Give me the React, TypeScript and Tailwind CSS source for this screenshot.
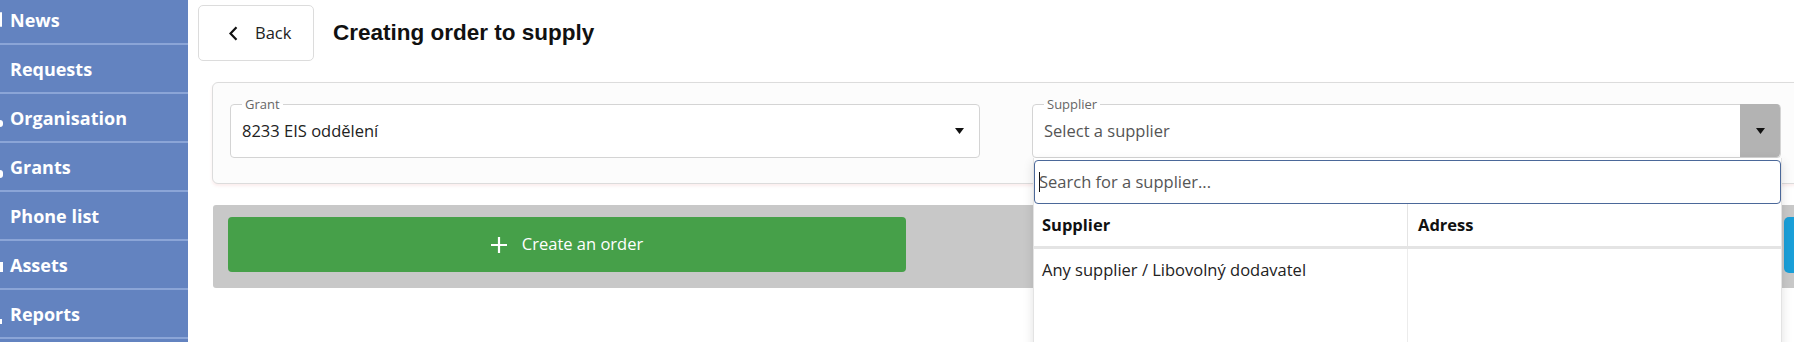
import React from "react";

const menu = [
  { label: "News", mark: "h-[15px] w-[2px] rounded-[1px]" },
  { label: "Requests", mark: "" },
  { label: "Organisation", mark: "h-[7px] w-[3px] rounded-r-full translate-y-[6px]" },
  { label: "Grants", mark: "h-[8px] w-[4px] rounded-r-full translate-y-[7px]" },
  { label: "Phone list", mark: "" },
  { label: "Assets", mark: "h-[10px] w-[3px] translate-y-[2px]" },
  { label: "Reports", mark: "h-[5px] w-[2px] translate-y-[8px]" },
];

function Sidebar() {
  return (
    <aside className="w-[188px] shrink-0 bg-[#6383c0] -mt-[4px]">
      {menu.map((m) => (
        <div
          key={m.label}
          className="flex h-[49px] items-center border-b-2 border-[#8ba5d7] text-[18px] font-bold text-white"
        >
          <span className="flex w-[3px] justify-start">
            {m.mark && <span className={"block bg-white " + m.mark} />}
          </span>
          <span className="ml-[7px] pt-[2px]">{m.label}</span>
        </div>
      ))}
    </aside>
  );
}

function Caret() {
  return (
    <svg width="9" height="6" viewBox="0 0 9 6">
      <path d="M0 0h9L4.5 6z" fill="#111" />
    </svg>
  );
}

function Field({ label, children }: { label: string; children: React.ReactNode }) {
  return (
    <fieldset className="relative h-[62px] rounded-[4px] border border-[#d4d4d4] bg-white px-[11px]">
      <legend className="px-[3px] text-[13px] leading-[16px] text-[#666]">{label}</legend>
      {children}
    </fieldset>
  );
}

export default function App() {
  return (
    <div className="flex h-[342px] w-[1794px] overflow-hidden bg-white font-['Open_Sans',sans-serif] text-[#222]">
      <Sidebar />
      <main className="min-w-0 flex-1">
        {/* Header */}
        <div className="flex items-center pl-[10px] pt-[5px]">
          <button className="flex h-[56px] w-[116px] items-center rounded-[5px] border border-[#dcdcdc] bg-white pl-[29px] text-[16.5px] text-[#222]">
            <svg width="11" height="15" viewBox="0 0 11 15" className="mr-[16px]">
              <path d="M8.5 1.2L2.5 7.5l6 6.3" fill="none" stroke="#111" strokeWidth="2.2" />
            </svg>
            Back
          </button>
          <h1 className="ml-[19px] -mt-[1px] font-['Liberation_Sans',Arial,sans-serif] text-[22.5px] font-bold text-[#111]">
            Creating order to supply
          </h1>
        </div>

        {/* Form panel */}
        <div className="ml-[24px] mt-[21px] w-[1588px] rounded-[6px] border border-[#dcdcdc] bg-[#fcfcfc] px-[17px] pb-[25px] pt-[13px] shadow-[0_2px_3px_rgba(225,110,110,0.12)]">
          <div className="grid grid-cols-[750px_749px] gap-x-[52px]">
            <Field label="Grant">
              <div className="flex h-[38px] items-center justify-between pr-[4px] text-[16.5px]">
                <span>8233 EIS oddělení</span>
                <Caret />
              </div>
            </Field>

            <div className="relative">
              <Field label="Supplier">
                <div className="flex h-[38px] items-center text-[16.5px] text-[#555]">Select a supplier</div>
                <div className="absolute bottom-0 right-0 top-[-8px] flex w-[40px] items-center justify-center rounded-r-[4px] bg-[#b3b3b3]">
                  <Caret />
                </div>
              </Field>

              {/* Open supplier dropdown */}
              <div className="absolute left-[1px] top-[62px] z-10 h-[200px] w-[749px] border-x border-[#e3e3e3] bg-white pt-[2px] shadow-[0_4px_10px_rgba(0,0,0,0.12)]">
                <div className="flex h-[44px] items-center rounded-[4px] border border-[#4b6899] px-[4px] text-[16.5px] text-[#555]">
                  <span className="h-[20px] w-px bg-[#111]" />
                  <span className="-ml-px">Search for a supplier...</span>
                </div>
                <div className="grid grid-cols-[374px_1fr] text-[16.5px]">
                  <div className="flex h-[45px] items-center border-b-[3px] border-r border-[#e4e4e4] px-[8px] font-bold text-[#111]">
                    Supplier
                  </div>
                  <div className="flex h-[45px] items-center border-b-[3px] border-[#e4e4e4] px-[10px] font-bold text-[#111]">
                    Adress
                  </div>
                  <div className="h-[120px] border-r border-[#ececec] px-[8px] pt-[9px]">
                    Any supplier / Libovolný dodavatel
                  </div>
                  <div className="h-[120px]" />
                </div>
              </div>
            </div>
          </div>
        </div>

        {/* Action bar */}
        <div className="ml-[25px] mt-[21px] flex h-[83px] w-[1800px] items-start rounded-[3px] bg-[#c8c8c8] pl-[15px] pt-[12px]">
          <button className="flex h-[55px] w-[678px] shrink-0 items-center justify-center rounded-[4px] bg-[#46a049] text-[16.5px] text-white">
            <svg width="16" height="16" viewBox="0 0 16 16" className="mr-[15px]">
              <path d="M8 0v16M0 8h16" stroke="#fff" strokeWidth="2.2" />
            </svg>
            Create an order
          </button>
          <button className="ml-[878px] h-[56px] w-[400px] shrink-0 rounded-[5px] bg-[#1a9fd8]" />
        </div>
      </main>
    </div>
  );
}
